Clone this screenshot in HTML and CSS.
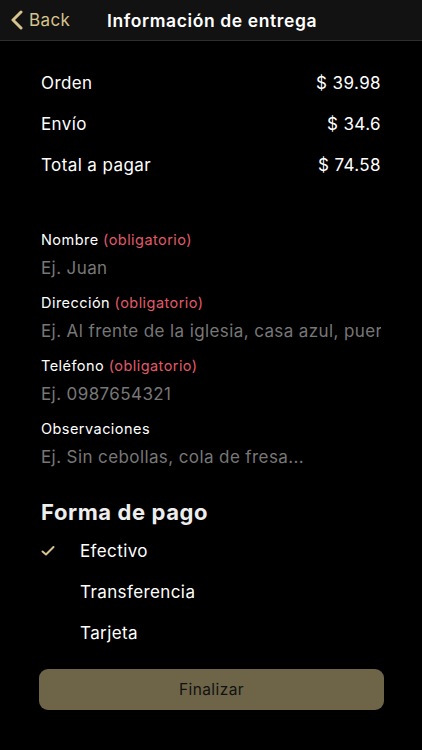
FILE: index.html
```html
<!DOCTYPE html>
<html>
  <head>
    <title>Información de entrega</title>
    <link rel="stylesheet" href="styles.css">
  </head>
  <body>
    <div class="navbar">
      <div class="back">
        <svg width="14" height="20" viewBox="0 0 14 20">
          <path d="M11 2 L3 10 L11 18" fill="none" stroke="#d6c38e" stroke-width="3" stroke-linecap="round" stroke-linejoin="round" />
        </svg>
        <span>Back</span>
      </div>
      <div class="nav-title">Información de entrega</div>
    </div>

    <div class="container">
      <!-- Resumen -->
      <div class="summary">
        <div class="row"><span>Orden</span><span>$ 39.98</span></div>
        <div class="row"><span>Envío</span><span>$ 34.6</span></div>
        <div class="row"><span>Total a pagar</span><span>$ 74.58</span></div>
      </div>

      <!-- Datos de entrega -->
      <div class="fields">
        <div class="field">
          <label>Nombre <em>(obligatorio)</em></label>
          <div class="placeholder">Ej. Juan</div>
        </div>
        <div class="field">
          <label>Dirección <em>(obligatorio)</em></label>
          <div class="placeholder">Ej. Al frente de la iglesia, casa azul, puerta verde</div>
        </div>
        <div class="field">
          <label>Teléfono <em>(obligatorio)</em></label>
          <div class="placeholder">Ej. 0987654321</div>
        </div>
        <div class="field">
          <label>Observaciones</label>
          <div class="placeholder">Ej. Sin cebollas, cola de fresa...</div>
        </div>
      </div>

      <!-- Forma de pago -->
      <h2 class="section-title">Forma de pago</h2>
      <div class="options">
        <div class="option">
          <span class="check">
            <svg width="14" height="12" viewBox="0 0 14 12">
              <path d="M1.5 6.5 L5 9.5 L12.5 2" fill="none" stroke="#d6c38e" stroke-width="2" stroke-linecap="round" stroke-linejoin="round" />
            </svg>
          </span>
          <span>Efectivo</span>
        </div>
        <div class="option"><span class="check"></span><span>Transferencia</span></div>
        <div class="option"><span class="check"></span><span>Tarjeta</span></div>
      </div>

      <button class="btn-finish">Finalizar</button>
    </div>
  </body>
</html>
```

FILE: styles.css
```css
body {
  margin: 0;
  background: #000;
  color: #fff;
  font-family: Inter, "Liberation Sans", sans-serif;
  letter-spacing: 0.4px;
}
.navbar {
  height: 40px;
  background: #121212;
  border-bottom: 1px solid #2e2e2e;
  display: flex;
  align-items: center;
}
.back {
  display: flex;
  align-items: center;
  gap: 5px;
  padding-left: 10px;
  color: #d6c38e;
  font-size: 17px;
  width: 97px;
}
.nav-title {
  font-size: 17.5px;
  font-weight: 600;
  letter-spacing: 0.6px;
}
.container {
  padding: 0 41px;
}
.summary {
  padding-top: 22px;
}
.row {
  display: flex;
  justify-content: space-between;
  height: 41px;
  line-height: 41px;
  font-size: 17px;
}
.fields {
  margin-top: 44px;
}
.field {
  height: 63px;
}
.field label {
  display: block;
  font-size: 14.5px;
  line-height: 20px;
  letter-spacing: 0.45px;
}
.field label em {
  font-style: normal;
  color: #e05a6a;
}
.placeholder {
  font-size: 17px;
  line-height: 36px;
  color: #777;
  white-space: nowrap;
  overflow: hidden;
}
.section-title {
  margin: 12px 0 0;
  font-size: 22px;
  font-weight: 700;
  line-height: 36px;
  letter-spacing: 0.6px;
  color: #eee;
}
.option {
  display: flex;
  align-items: center;
  height: 41px;
  font-size: 17px;
}
.check {
  width: 39px;
  display: flex;
  align-items: center;
}
.btn-finish {
  display: block;
  width: 345px;
  height: 41px;
  margin: 16px 0 0 -2px;
  border: none;
  border-radius: 9px;
  background: #6e6548;
  color: #111;
  font-family: inherit;
  font-size: 15.5px;
  letter-spacing: 0.4px;
}
```
